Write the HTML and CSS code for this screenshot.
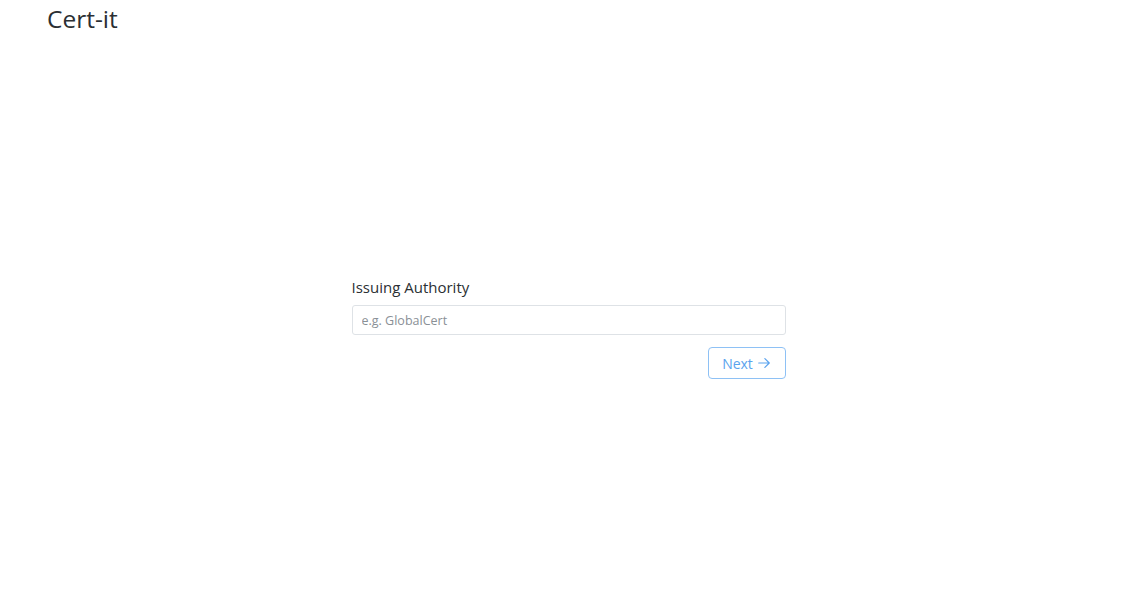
FILE: index.html
```html
<!DOCTYPE html>
<html lang="en">
<head>
<meta charset="utf-8">
<title>Cert-it</title>
<link rel="stylesheet" href="styles.css">
</head>
<body>
<header class="header">
  <h1 class="brand">Cert-it</h1>
</header>
<main class="main">
  <form class="step-form">
    <label class="field-label" for="issuer">Issuing Authority</label>
    <input class="field-input" id="issuer" type="text" placeholder="e.g. GlobalCert">
    <div class="actions">
      <button class="btn-next" type="button">Next <span class="arrow">
        <svg width="14" height="14" viewBox="0 0 16 16" fill="none" stroke="currentColor" stroke-width="1.4" stroke-linecap="round" stroke-linejoin="round"><path d="M2 8h12M9 3l5 5-5 5"/></svg>
      </span></button>
    </div>
  </form>
</main>
</body>
</html>
```

FILE: styles.css
```css
* { box-sizing: border-box; }
html, body { margin: 0; padding: 0; background: #fff; }
body {
  font-family: "Open Sans", "Noto Sans", Arial, sans-serif;
  color: #212529;
  width: 1135px;
  height: 590px;
  overflow: hidden;
}
.header {
  padding: 3px 0 0 47px;
}
.brand {
  margin: 0;
  font-size: 24.5px;
  font-weight: 400;
  line-height: 32px;
  color: #2b2f33;
}
.main {
  display: flex;
  justify-content: center;
  padding: 241px 0 0 2px;
}
.step-form {
  width: 434px;
  display: flex;
  flex-direction: column;
}
.field-label {
  font-size: 15px;
  line-height: 22px;
  color: #2b2f33;
  margin-bottom: 7px;
}
.field-input {
  height: 30px;
  border: 1px solid #dee2e6;
  border-radius: 3px;
  padding: 0 9px;
  font-family: inherit;
  font-size: 12.5px;
  color: #495057;
  outline: none;
}
.field-input::placeholder { color: #8a9096; }
.actions {
  display: flex;
  justify-content: flex-end;
  margin-top: 12px;
}
.btn-next {
  width: 78px;
  height: 32px;
  border: 1px solid #8ec1f5;
  border-radius: 4px;
  background: #fff;
  color: #5ba3ee;
  font-family: inherit;
  font-size: 14px;
  display: flex;
  align-items: center;
  justify-content: center;
  gap: 4px;
  padding: 0;
  cursor: pointer;
}
.arrow { display: inline-flex; }
```
